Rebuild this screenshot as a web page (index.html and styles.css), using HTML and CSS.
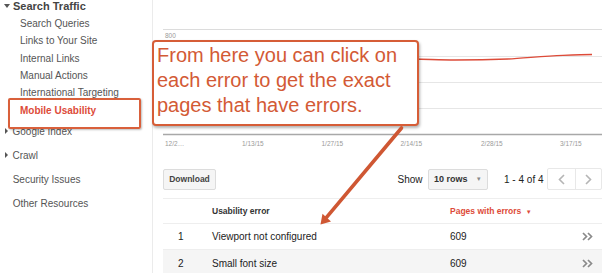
FILE: index.html
```html
<!DOCTYPE html>
<html lang="en">
<head>
    <meta charset="UTF-8">
    <title>Mobile Usability</title>
    <link rel="stylesheet" href="styles.css">
</head>
<body>
    <div class="app">
        <nav class="sidebar">
            <div class="nav-head"><span class="caret caret-down"></span>Search Traffic</div>
            <a class="nav-sub">Search Queries</a>
            <a class="nav-sub">Links to Your Site</a>
            <a class="nav-sub">Internal Links</a>
            <a class="nav-sub">Manual Actions</a>
            <a class="nav-sub">International Targeting</a>
            <a class="nav-sub active">Mobile Usability</a>
            <div class="nav-top"><span class="caret caret-right"></span>Google Index</div>
            <div class="nav-top"><span class="caret caret-right"></span>Crawl</div>
            <div class="nav-top plain">Security Issues</div>
            <div class="nav-top plain">Other Resources</div>
        </nav>

        <main class="main">
            <svg class="chart" width="439" height="152" viewBox="0 0 439 152">
                <line x1="0" y1="29.5" x2="439" y2="29.5" stroke="#dcdcdc" />
                <text x="2" y="37.5" class="chart-label">800</text>
                <line x1="0" y1="56.5" x2="439" y2="56.5" stroke="#e6e6e6" />
                <line x1="0" y1="82.5" x2="439" y2="82.5" stroke="#e6e6e6" />
                <line x1="0" y1="108.5" x2="439" y2="108.5" stroke="#e6e6e6" />
                <line x1="0" y1="134.5" x2="439" y2="134.5" stroke="#a8a8a8" stroke-width="1.5" />
                <path d="M250 59 C270 59.5 280 60 292 60 S330 59.6 345 59 S380 56 400 55.3 S420 54.6 429 54.5" fill="none" stroke="#dd4b39" stroke-width="1.3" />
                <text x="2" y="145.5" class="chart-label">12/2…</text>
                <text x="79" y="145.5" class="chart-label">1/13/15</text>
                <text x="158.5" y="145.5" class="chart-label">1/27/15</text>
                <text x="237.5" y="145.5" class="chart-label">2/14/15</text>
                <text x="318" y="145.5" class="chart-label">2/28/15</text>
                <text x="397" y="145.5" class="chart-label">3/17/15</text>
            </svg>

            <div class="toolbar">
                <button class="btn">Download</button>
                <div class="toolbar-right">
                    <span class="show-label">Show</span>
                    <div class="select">10 rows<span class="select-arrow">▾</span></div>
                    <span class="range">1 - 4 of 4</span>
                    <div class="pager">
                        <span class="pager-btn">
                            <svg width="7" height="11" viewBox="0 0 7 11"><polyline points="6,1 1.5,5.5 6,10" fill="none" stroke="#b5b5b5" stroke-width="1.6" /></svg>
                        </span>
                        <span class="pager-btn">
                            <svg width="7" height="11" viewBox="0 0 7 11"><polyline points="1,1 5.5,5.5 1,10" fill="none" stroke="#b5b5b5" stroke-width="1.6" /></svg>
                        </span>
                    </div>
                </div>
            </div>

            <div class="table">
                <div class="row head">
                    <span></span>
                    <span>Usability error</span>
                    <span class="sorted">Pages with errors <span class="sort-arrow">▼</span></span>
                    <span></span>
                </div>
                <div class="row">
                    <span class="idx">1</span>
                    <span>Viewport not configured</span>
                    <span>609</span>
                    <span class="more"><svg width="11" height="9" viewBox="0 0 11 9"><polyline points="1,1 4.5,4.5 1,8" fill="none" stroke="#8a8a8a" stroke-width="1.7" /><polyline points="6,1 9.5,4.5 6,8" fill="none" stroke="#8a8a8a" stroke-width="1.7" /></svg></span>
                </div>
                <div class="row alt">
                    <span class="idx">2</span>
                    <span>Small font size</span>
                    <span>609</span>
                    <span class="more"><svg width="11" height="9" viewBox="0 0 11 9"><polyline points="1,1 4.5,4.5 1,8" fill="none" stroke="#8a8a8a" stroke-width="1.7" /><polyline points="6,1 9.5,4.5 6,8" fill="none" stroke="#8a8a8a" stroke-width="1.7" /></svg></span>
                </div>
            </div>
        </main>

        <!-- annotation -->
        <div class="callout">From here you can click on<br>each error to get the exact<br>pages that have errors.</div>
        <svg class="arrow" width="610" height="273" viewBox="0 0 610 273">
            <line x1="401.5" y1="128" x2="326.5" y2="217.4" stroke="#cf5733" stroke-width="3.6" stroke-linecap="round" />
            <polygon points="320.5,224.5 331,221.5 322.5,213.8" fill="#cf5733" />
        </svg>
    </div>
</body>
</html>
```

FILE: styles.css
```css
* {
    margin: 0;
    padding: 0;
    box-sizing: border-box;
}

body {
    background-color: #ffffff;
    font-family: "Liberation Sans", Arial, sans-serif;
    color: #222;
    overflow: hidden;
}

.app {
    position: relative;
    display: flex;
    width: 610px;
    height: 273px;
    overflow: hidden;
}

/* Sidebar */

.sidebar {
    width: 152px;
    flex-shrink: 0;
    margin-top: -2.7px;
}

.nav-head {
    display: flex;
    align-items: center;
    height: 17.4px;
    padding-left: 4px;
    font-size: 11px;
    font-weight: bold;
    color: #444;
}

.caret {
    display: inline-block;
    width: 0;
    height: 0;
}

.caret-down {
    border-left: 3px solid transparent;
    border-right: 3px solid transparent;
    border-top: 4px solid #555;
    margin-right: 3px;
}

.caret-right {
    border-top: 3px solid transparent;
    border-bottom: 3px solid transparent;
    border-left: 3px solid #555;
    margin-right: 4.5px;
}

.nav-sub {
    position: relative;
    display: flex;
    align-items: center;
    height: 17.4px;
    padding-left: 20px;
    font-size: 10px;
    color: #555;
}

.nav-sub.active {
    color: #dd4b39;
    font-weight: bold;
}

.nav-sub.active::after {
    content: "";
    position: absolute;
    left: 8px;
    top: -4px;
    width: 129px;
    height: 27px;
    border: 2px solid #d9603b;
    border-radius: 2px;
    box-shadow: 1px 1px 2px rgba(0, 0, 0, 0.25);
}

.nav-top {
    display: flex;
    align-items: center;
    height: 24px;
    padding-left: 5px;
    font-size: 10px;
    color: #555;
}

.nav-top.plain {
    padding-left: 12.7px;
}

/* Main */

.main {
    flex: 1;
    border-left: 1px solid #ebebeb;
    padding: 0 8px 0 10px;
}

.chart {
    display: block;
}

.chart-label {
    font-family: "Liberation Sans", Arial, sans-serif;
    font-size: 6.5px;
    fill: #9a9a9a;
}

.toolbar {
    display: flex;
    align-items: center;
    height: 22px;
    margin-top: 16px;
}

.btn {
    width: 53px;
    height: 21px;
    border: 1px solid #dcdcdc;
    border-radius: 2px;
    background-color: #f5f5f5;
    font-family: "Liberation Sans", Arial, sans-serif;
    font-size: 8.5px;
    font-weight: bold;
    color: #444;
}

.toolbar-right {
    display: flex;
    align-items: center;
    margin-left: auto;
}

.show-label {
    font-size: 10px;
    margin-right: 5.5px;
}

.select {
    position: relative;
    display: flex;
    align-items: center;
    width: 60px;
    height: 21px;
    padding-left: 5px;
    border: 1px solid #dcdcdc;
    border-radius: 2px;
    background-color: #f5f5f5;
    font-size: 9px;
    font-weight: bold;
    color: #333;
}

.select-arrow {
    position: absolute;
    right: 6px;
    top: 5px;
    font-size: 7px;
    font-weight: normal;
    color: #888;
}

.range {
    font-size: 10px;
    margin-left: 16px;
    margin-right: 3.5px;
}

.pager {
    display: flex;
    height: 22px;
    border: 1px solid #e8e8e8;
    border-radius: 2px;
}

.pager-btn {
    display: flex;
    align-items: center;
    justify-content: center;
    width: 26.5px;
}

.pager-btn + .pager-btn {
    border-left: 1px solid #e8e8e8;
}

/* Table */

.table {
    margin-top: 8px;
    border-top: 1px solid #eeeeee;
}

.row {
    display: grid;
    grid-template-columns: 49px 238px 1fr 20px;
    align-items: center;
    height: 26px;
    font-size: 10px;
    color: #222;
    border-bottom: 1px solid #eeeeee;
}

.row.head {
    height: 25px;
    font-size: 8.5px;
    font-weight: bold;
    color: #333;
}

.row.alt {
    background-color: #f5f5f5;
    border-bottom: none;
}

.idx {
    padding-left: 15px;
}

.sorted {
    color: #dd4b39;
}

.sort-arrow {
    font-size: 6px;
    margin-left: 2px;
}

.more {
    display: flex;
    align-items: center;
}

/* Annotation */

.callout {
    position: absolute;
    left: 152px;
    top: 40px;
    width: 267px;
    height: 86px;
    padding: 1px 0 0 3px;
    background: #ffffff;
    border: 2px solid #d65d37;
    border-radius: 4px;
    box-shadow: 1px 2px 3px rgba(0, 0, 0, 0.3);
    font-family: "Liberation Sans", Arial, sans-serif;
    font-size: 20px;
    line-height: 25px;
    color: #d35a35;
}

.arrow {
    position: absolute;
    left: 0;
    top: 0;
    pointer-events: none;
}
```
